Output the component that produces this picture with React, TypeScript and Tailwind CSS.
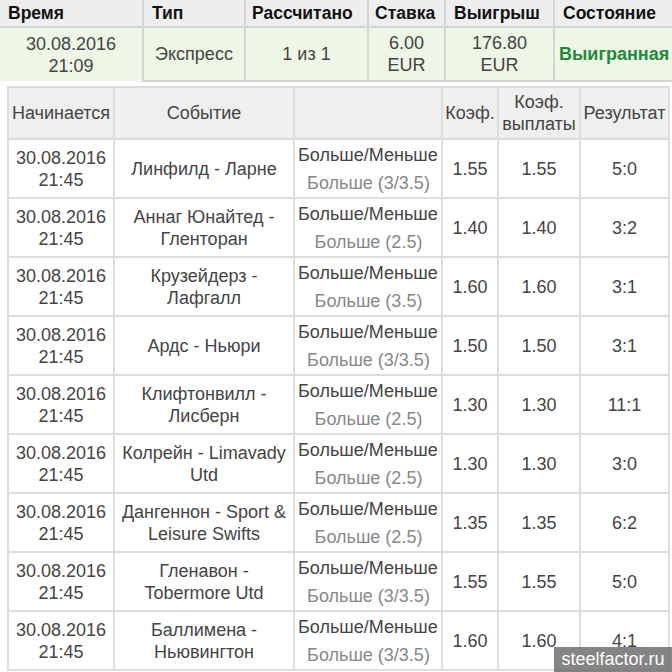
const rows = [
  { event: ["Линфилд - Ларне"], pick: "Больше (3/3.5)", k: "1.55", res: "5:0" },
  { event: ["Аннаг Юнайтед -", "Гленторан"], pick: "Больше (2.5)", k: "1.40", res: "3:2" },
  { event: ["Крузейдерз -", "Лафгалл"], pick: "Больше (3.5)", k: "1.60", res: "3:1" },
  { event: ["Ардс - Ньюри"], pick: "Больше (3/3.5)", k: "1.50", res: "3:1" },
  { event: ["Клифтонвилл -", "Лисберн"], pick: "Больше (2.5)", k: "1.30", res: "11:1" },
  { event: ["Колрейн - Limavady", "Utd"], pick: "Больше (2.5)", k: "1.30", res: "3:0" },
  { event: ["Дангеннон - Sport &", "Leisure Swifts"], pick: "Больше (2.5)", k: "1.35", res: "6:2" },
  { event: ["Гленавон -", "Tobermore Utd"], pick: "Больше (3/3.5)", k: "1.55", res: "5:0" },
  { event: ["Баллимена -", "Ньювингтон"], pick: "Больше (3/3.5)", k: "1.60", res: "4:1" },
];

export default function App() {
  return (
    <div
      className="relative w-[672px] h-[672px] overflow-hidden bg-white text-[#444] text-[18px]"
      style={{ fontFamily: '"Liberation Sans", Arial, sans-serif' }}
    >
      {/* шапка ставки */}
      <table className="w-[672px] table-fixed border-collapse">
        <colgroup>
          <col className="w-[143px]" />
          <col className="w-[102px]" />
          <col className="w-[123px]" />
          <col className="w-[77px]" />
          <col className="w-[109px]" />
          <col className="w-[118px]" />
        </colgroup>
        <thead>
          <tr className="h-[27px] bg-[#eeeeee] text-[#111] font-bold text-left text-[17.5px] leading-[22px]">
            <th className="pl-2 border-r-2 border-b-2 border-[#d4d4d4]">Время</th>
            <th className="pl-2 border-x-2 border-b-2 border-[#d4d4d4]">Тип</th>
            <th className="pl-[6px] border-x-2 border-b-2 border-[#d4d4d4] whitespace-nowrap">Рассчитано</th>
            <th className="pl-[6px] border-x-2 border-b-2 border-[#d4d4d4]">Ставка</th>
            <th className="pl-2 border-x-2 border-b-2 border-[#d4d4d4]">Выигрыш</th>
            <th className="pl-2 border-l-2 border-b-2 border-[#d4d4d4] whitespace-nowrap">Состояние</th>
          </tr>
        </thead>
        <tbody>
          <tr className="h-[54px] bg-[#eef6e6] text-center leading-[22px]">
            <td>30.08.2016<br />21:09</td>
            <td className="border-x-2 border-b-2 border-[#d4d4d4]">Экспресс</td>
            <td className="border-x-2 border-b-2 border-[#d4d4d4]">1 из 1</td>
            <td className="border-x-2 border-b-2 border-[#d4d4d4]">6.00<br />EUR</td>
            <td className="border-x-2 border-b-2 border-[#d4d4d4]">176.80<br />EUR</td>
            <td className="border-l-2 border-b-2 border-[#d4d4d4] text-left pl-1 font-bold text-[#208a3c] whitespace-nowrap">
              Выигранная
            </td>
          </tr>
        </tbody>
      </table>

      {/* события */}
      <table className="mt-[4px] ml-[7px] w-[661px] table-fixed border-collapse text-center leading-[22px]">
        <colgroup>
          <col className="w-[106px]" />
          <col className="w-[180px]" />
          <col className="w-[148px]" />
          <col className="w-[56px]" />
          <col className="w-[82px]" />
          <col className="w-[89px]" />
        </colgroup>
        <thead>
          <tr className="h-[52px] bg-[#efefef]">
            <th className="border-2 border-[#dddddd] font-normal">Начинается</th>
            <th className="border-2 border-[#dddddd] font-normal">Событие</th>
            <th className="border-2 border-[#dddddd] font-normal"></th>
            <th className="border-2 border-[#dddddd] font-normal">Коэф.</th>
            <th className="border-2 border-[#dddddd] font-normal">Коэф.<br />выплаты</th>
            <th className="border-2 border-[#dddddd] font-normal">Результат</th>
          </tr>
        </thead>
        <tbody>
          {rows.map((r, i) => (
            <tr key={i} className="h-[59px]">
              <td className="border-2 border-[#dddddd] whitespace-nowrap">30.08.2016<br />21:45</td>
              <td className="border-2 border-[#dddddd]">
                {r.event.map((t, j) => (
                  <div key={j} className="whitespace-nowrap">{t}</div>
                ))}
              </td>
              <td className="border-2 border-[#dddddd] pl-[3px] pr-[2px]">
                <div className="text-left whitespace-nowrap">Больше/Меньше</div>
                <div className="mt-[6px] text-[#888] whitespace-nowrap">{r.pick}</div>
              </td>
              <td className="border-2 border-[#dddddd]">{r.k}</td>
              <td className="border-2 border-[#dddddd]">{r.k}</td>
              <td className="border-2 border-[#dddddd]">{r.res}</td>
            </tr>
          ))}
        </tbody>
      </table>

      <div className="absolute right-0 bottom-0 w-[118px] h-[25px] bg-[#6f6f6f]/85 text-white text-[18px] leading-[25px] text-center">
        steelfactor.ru
      </div>
    </div>
  );
}
